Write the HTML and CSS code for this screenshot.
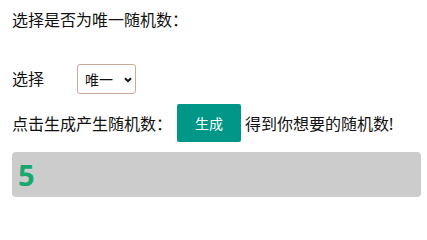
FILE: index.html
```html
<!DOCTYPE html>
<html lang="zh">
<head>
<meta charset="utf-8">
<link rel="stylesheet" href="styles.css">
</head>
<body>
<div class="page">
  <div class="row row-title">选择是否为唯一随机数：</div>
  <div class="row row-select">
    <span class="label">选择</span>
    <div class="select-wrap">
      <select class="select">
        <option>唯一</option>
        <option>不唯一</option>
      </select>
      <svg class="chev" width="8" height="6" viewBox="0 0 8 6"><path d="M1 1.2 L4 4.2 L7 1.2" fill="none" stroke="#111" stroke-width="2"/></svg>
    </div>
  </div>
  <div class="row row-gen">
    <span class="text">点击生成产生随机数：</span>
    <button class="btn">生成</button>
    <span class="text after">得到你想要的随机数!</span>
  </div>
  <div class="result">5</div>
</div>
</body>
</html>
```
FILE: styles.css
```css
html, body {
  margin: 0;
  padding: 0;
  background: #fff;
}
.page {
  padding: 8px 6px 0 12px;
  font-family: "Noto Sans", "Noto Sans CJK SC", sans-serif;
  font-size: 16px;
  color: #111;
}
.row {
  display: flex;
  align-items: center;
}
.row-title {
  height: 24px;
  line-height: 24px;
}
.row-select {
  margin-top: 32px;
  height: 30px;
}
.label {
  width: 65px;
  line-height: 30px;
}
.select-wrap {
  position: relative;
  width: 59px;
  height: 30px;
}
.select {
  appearance: none;
  -webkit-appearance: none;
  box-sizing: border-box;
  width: 59px;
  height: 30px;
  border: 1px solid #c9a898;
  border-radius: 3px;
  background: #fff;
  padding: 0 0 0 7px;
  font-family: "Noto Sans CJK SC", sans-serif;
  font-size: 14px;
  color: #111;
}
.chev {
  position: absolute;
  left: 47px;
  top: 13px;
  pointer-events: none;
}
.row-gen {
  margin-top: 10px;
  height: 38px;
}
.btn {
  margin-left: 5px;
  width: 64px;
  height: 38px;
  border: none;
  border-radius: 2px;
  background: #009688;
  color: #fff;
  font-family: "Noto Sans CJK SC", sans-serif;
  font-size: 14px;
  padding: 0;
}
.after {
  margin-left: 4px;
}
.result {
  margin-top: 10px;
  height: 45px;
  background: #cccccc;
  border-radius: 4px;
  box-sizing: border-box;
  padding-left: 6px;
  font-family: "Noto Sans", sans-serif;
  font-weight: bold;
  font-size: 29px;
  line-height: 45px;
  color: #17a870;
}
```
